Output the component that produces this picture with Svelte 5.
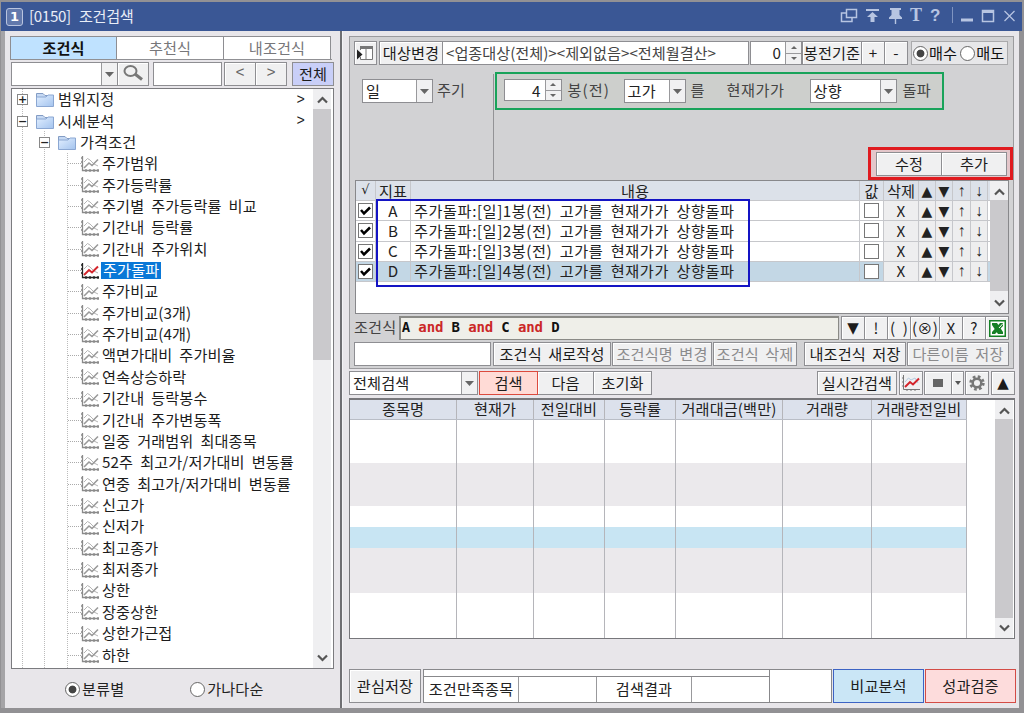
<script lang="ts">
	const tabs = ["조건식", "추천식", "내조건식"];

	const items = [
		"주가범위", "주가등락률", "주기별 주가등락률 비교", "기간내 등락률",
		"기간내 주가위치", "주가돌파", "주가비교", "주가비교(3개)", "주가비교(4개)",
		"액면가대비 주가비율", "연속상승하락", "기간내 등락봉수", "기간내 주가변동폭",
		"일중 거래범위 최대종목", "52주 최고가/저가대비 변동률", "연중 최고가/저가대비 변동률",
		"신고가", "신저가", "최고종가", "최저종가", "상한", "장중상한", "상한가근접", "하한"
	];
	let selected = $state("주가돌파");

	const conditions = ["A", "B", "C", "D"];
	let current = $state("D");

	const columns = ["종목명", "현재가", "전일대비", "등락률", "거래대금(백만)", "거래량", "거래량전일비"];
	const bands = ["white", "gray", "white short", "cyan", "gray tall", "white last"];
</script>

{#snippet down()}
	<span class="drop"><svg width="9" height="5"><path d="M0 0H9L4.5 5Z" fill="#666" /></svg></span>
{/snippet}

{#snippet chart(active: boolean)}
	<svg class="chart" width="18" height="16" viewBox="0 0 18 16" fill="none">
		<path d="M1.5 0V14.5H18M0 2H2M0 6H2M0 10H2M5 13V16M9 13V16M13 13V16M17 13V16" stroke={active ? "#222" : "#8a8a8a"} stroke-width="1.3" />
		<path d="M3 6L6.5 2.5L9 4L13 8L17 10" stroke="#b5b5b5" />
		<path d="M3 12L8 7L11 9.5L17 3.5" stroke={active ? "#d3242b" : "#999"} stroke-width={active ? 2 : 1.6} />
	</svg>
{/snippet}

{#snippet folder()}
	<svg class="folder" width="18" height="15" viewBox="0 0 18 15">
		<path d="M.5 1.5H7L9 3.5H15V6H.5Z" fill="#c6d9f3" stroke="#839cc4" />
		<path d="M.5 5H10L12 3H17.5V14.5H.5Z" fill="url(#folderFill)" stroke="#8ba7d2" />
	</svg>
{/snippet}

{#snippet scrollbar()}
	<div class="scroll">
		<svg class="up" width="11" height="8"><path d="M1 6.5L5.5 2L10 6.5" fill="none" stroke="#555" stroke-width="2.2" /></svg>
		<div class="thumb"></div>
		<svg class="dn" width="11" height="8"><path d="M1 1.5L5.5 6L10 1.5" fill="none" stroke="#555" stroke-width="2.2" /></svg>
	</div>
{/snippet}

{#snippet spinner()}
	<span class="spin">
		<span><svg width="6" height="3"><path d="M0 3H6L3 0Z" fill="#666" /></svg></span>
		<span><svg width="6" height="3"><path d="M0 0H6L3 3Z" fill="#666" /></svg></span>
	</span>
{/snippet}

<svg width="0" height="0" class="defs">
	<linearGradient id="folderFill" x1="0" y1="0" x2="1" y2="1">
		<stop offset="0" stop-color="#e2efff" />
		<stop offset="1" stop-color="#a3c3ee" />
	</linearGradient>
</svg>

<div class="window">
	<header>
		<span class="num">1</span>
		<span class="title">[0150] 조건검색</span>
		<svg class="tools" width="176" height="22" viewBox="0 0 176 22" fill="none" stroke="#b7c5e2" stroke-width="1.5">
			<path d="M6.5 3.5H16.500V11.500H6.500ZM6 7H1.500V15.500H12V12" />
			<path d="M26 4H39" stroke-width="2" />
			<path d="M32.500 6L38 11H34.500V16H30.500V11H27Z" fill="#b7c5e2" stroke="none" />
			<path d="M50 2H61V4H59.500V9L62 11.500V13H49V11.500L51.500 9V4H50ZM54.800 13H56.200V18H54.800Z" fill="#b7c5e2" stroke="none" />
			<path d="M112.500 1V17" stroke="#7f94c1" stroke-width="1" />
			<path d="M121 14H133" stroke-width="3" />
			<path d="M142.500 4.500H153.500V15.500H142.500Z" />
			<path d="M142 5.500H154" stroke-width="3" />
			<path d="M164.500 5L174.500 15M174.500 5L164.500 15" stroke-width="1.200" />
			<text x="70" y="15" class="tool-text">T</text>
			<text x="90" y="15" class="tool-help">?</text>
		</svg>
	</header>

	<main>
		<aside>
			<div class="tabs">
				{#each tabs as tab, i}
					<button class:active={i === 0}>{tab}</button>
				{/each}
			</div>
			<div class="find">
				<div class="combo keyword"><span></span>{@render down()}</div>
				<button class="lens" aria-label="검색">
					<svg width="20" height="16" viewBox="0 0 20 16" fill="none" stroke="#777"><ellipse cx="7.500" cy="6" rx="6" ry="5" stroke-width="2" /><path d="M12 9L19 14.500" stroke-width="3" /></svg>
				</button>
				<div class="field filter"></div>
				<button class="prev">&lt;</button>
				<button class="next">&gt;</button>
				<button class="all">전체</button>
			</div>

			<div class="tree">
				<div class="nodes">
					<div class="node root"><span class="box">+</span>{@render folder()}<span class="label">범위지정</span><span class="more">&gt;</span></div>
					<div class="node root"><span class="box">−</span>{@render folder()}<span class="label">시세분석</span><span class="more">&gt;</span></div>
					<div class="node sub"><span class="box">−</span>{@render folder()}<span class="label">가격조건</span></div>
					{#each items as item}
						<div class="node leaf">
							<span class="dots"></span>
							{@render chart(item === selected)}
							<button class="label" class:selected={item === selected} onclick={() => (selected = item)}>{item}</button>
						</div>
					{/each}
				</div>
				{@render scrollbar()}
			</div>

			<div class="sort">
				<span class="radio on"></span><span>분류별</span>
				<span class="radio second"></span><span>가나다순</span>
			</div>
		</aside>

		<section class="right">
			<div class="editor">
				<div class="target">
					<button class="panel-btn" aria-label="대상">
						<svg width="17" height="16" viewBox="0 0 17 16"><path d="M3.500 5V1.500H15.500V14.500H3.500V12M3 3H16M9 3V14" fill="#fff" stroke="#777" /><path d="M3 1H16V4H3Z" fill="#777" /><path d="M0 4.500L5.500 9.500L0 14.500Z" fill="#222" /></svg>
					</button>
					<button class="change">대상변경</button>
					<div class="field scope">&lt;업종대상(전체)&gt;&lt;제외없음&gt;&lt;전체월결산&gt;</div>
					<div class="field zero"><span>0</span>{@render spinner()}</div>
					<button class="base">봉전기준</button>
					<button class="plus">+</button>
					<button class="minus">-</button>
					<div class="side"><span class="radio on"></span><span>매수</span><span class="radio"></span><span>매도</span></div>
				</div>

				<div class="params">
					<div class="cycle">
						<div class="combo day"><span>일</span>{@render down()}</div>
						<span>주기</span>
					</div>
					<div class="rule-area">
						<div class="rule">
							<div class="field count"><span>4</span>{@render spinner()}</div>
							<span class="bar">봉(전)</span>
							<div class="combo high"><span>고가</span>{@render down()}</div>
							<span class="obj">를</span>
							<span class="now">현재가가</span>
							<div class="combo dir"><span>상향</span>{@render down()}</div>
							<span>돌파</span>
						</div>
						<div class="apply">
							<button>수정</button>
							<button>추가</button>
						</div>
					</div>
				</div>

				<div class="list">
					<div class="grid">
						<div class="line head">
							<span class="root-sign">√</span><span>지표</span><span>내용</span><span>값</span><span>삭제</span>
							<span class="tri">▲</span><span class="tri">▼</span><span class="arrow">↑</span><span class="arrow">↓</span>
						</div>
						{#each conditions as id, i}
							<div class="line" class:current={id === current}>
								<span class="tick"><i class="check"><svg width="11" height="10" viewBox="0 0 11 10"><path d="M1 4L4 7.500L10 1.500" fill="none" stroke="#000" stroke-width="2.500" /></svg></i></span>
								<span>{id}</span>
								<span class="desc">주가돌파:[일]{i + 1}봉(전) 고가를 현재가가 상향돌파</span>
								<span class="tick"><i class="check"></i></span>
								<span class="op">X</span>
								<span class="op tri">▲</span><span class="op tri">▼</span><span class="op arrow">↑</span><span class="op arrow">↓</span>
							</div>
						{/each}
						<div class="mark"></div>
					</div>
					{@render scrollbar()}
				</div>

				<div class="formula">
					<span class="caption">조건식</span>
					<div class="expr">A <b>and</b> B <b>and</b> C <b>and</b> D</div>
					<div class="ops">
						<button class="tri">▼</button><button>!</button><button class="paren open">( )</button><button class="paren">(⊗)</button><button>X</button><button>?</button>
						<button aria-label="Excel" class="excel">
							<svg width="17" height="17" viewBox="0 0 17 17"><rect x=".75" y=".75" width="15.500" height="15.500" fill="#fff" stroke="#158025" stroke-width="1.500" /><path d="M3 3H8L14 12V14H9L3 5Z" fill="#158025" /><path d="M14 3H11L3 12V14H6L14 6Z" fill="#158025" /><path d="M10 8L14 3.500" stroke="#fff" /></svg>
						</button>
					</div>
				</div>

				<div class="saves">
					<div class="field name"></div>
					<button class="create">조건식 새로작성</button>
					<button class="rename" disabled>조건식명 변경</button>
					<button class="remove" disabled>조건식 삭제</button>
					<button class="save">내조건식 저장</button>
					<button class="save-as" disabled>다른이름 저장</button>
				</div>
			</div>

			<div class="search">
				<div class="combo whole"><span>전체검색</span>{@render down()}</div>
				<button class="go">검색</button>
				<button class="more-btn">다음</button>
				<button class="reset">초기화</button>
				<button class="live">실시간검색</button>
				<button class="ic" aria-label="차트">
					<svg width="18" height="16" viewBox="0 0 18 16" fill="none">
						<path d="M1.5 0V14.5H18M0 3H2M0 7H2M0 11H2M5 14V16M9 14V16M13 14V16" stroke="#777" />
						<path d="M3 7L6.500 3L9 5L13 3L16 8" stroke="#b4cbe0" />
						<path d="M3 12L8 7L11 9.500L17 3.500" stroke="#d3242b" stroke-width="2" />
					</svg>
				</button>
				<button class="stop" aria-label="정지"><svg width="10" height="8"><rect width="10" height="8" fill="#666" /></svg></button>
				<button class="stop-menu" aria-label="메뉴"><svg width="6" height="4"><path d="M0 0H6L3 4Z" fill="#555" /></svg></button>
				<button class="ic" aria-label="설정">
					<svg width="16" height="16" viewBox="0 0 16 16" fill="none" stroke="#777"><circle cx="8" cy="8" r="6.200" stroke-width="3" stroke-dasharray="2.600 2.270" /><circle cx="8" cy="8" r="4.300" stroke-width="2.500" /></svg>
				</button>
				<button class="fold tri">▲</button>
			</div>

			<div class="result">
				<div class="table">
					<div class="cols head">
						{#each columns as column}<span>{column}</span>{/each}
					</div>
					{#each bands as band}
						<div class="cols {band}">
							{#each columns as _}<span></span>{/each}
						</div>
					{/each}
				</div>
				{@render scrollbar()}
			</div>

			<footer>
				<button class="keep">관심저장</button>
				<div class="stats">
					<div class="progress"></div>
					<div class="cells"><span>조건만족종목</span><span></span><span>검색결과</span><span></span></div>
				</div>
				<div class="blank"></div>
				<button class="compare">비교분석</button>
				<button class="verify">성과검증</button>
			</footer>
		</section>
	</main>
</div>

<style>
	:global(body) {
		margin: 0;
		overflow: hidden;
	}

	* {
		box-sizing: border-box;
	}

	.defs {
		position: absolute;
	}

	.window {
		width: 1024px;
		height: 713px;
		padding: 2px 2px 5px 1px;
		background: #929194;
		color: #222;
		font: 15.2px/20px "Noto Sans CJK KR", sans-serif;
		letter-spacing: 0.1px;
		word-spacing: 3.5px;
		white-space: nowrap;
	}

	svg {
		display: block;
		flex: none;
	}

	button {
		display: flex;
		justify-content: center;
		align-items: center;
		flex: none;
		height: 24px;
		margin: 0;
		padding: 0 0 3px;
		border: 1px solid #8e8e92;
		border-radius: 0;
		background: #f0f0f1;
		box-shadow: inset 1px 1px #fff;
		color: #1c1c1c;
		font: inherit;
		letter-spacing: inherit;
		word-spacing: inherit;
		white-space: nowrap;
	}

	button:disabled {
		color: #8b8b8d;
	}

	header {
		display: flex;
		align-items: center;
		height: 29px;
		padding: 0 6px 0 5px;
		background: #3a5795;
		color: #e8edf7;
	}

	.num {
		width: 17px;
		height: 18px;
		border: 1.5px solid #b9c4df;
		border-radius: 3px;
		background: #6279ac;
		color: #fff;
		font: bold 13px/15px "DejaVu Sans", sans-serif;
		text-align: center;
	}

	.title {
		margin: -4px 0 0 6px;
		letter-spacing: -0.35px;
		word-spacing: 5px;
	}

	.tools {
		margin-left: auto;
	}

	.tool-text {
		fill: #b7c5e2;
		stroke: none;
		font: bold 18px "Liberation Serif", serif;
	}

	.tool-help {
		fill: #b7c5e2;
		stroke: none;
		font: bold 17px "Liberation Sans", sans-serif;
	}

	main {
		display: flex;
		height: 677px;
	}

	aside {
		width: 341px;
		padding: 5px 0 0 5px;
		border-left: 4px solid #a5a4a7;
		border-right: 2px solid #6f6f73;
		background: #e8e6ea;
	}

	.tabs {
		display: flex;
		width: 322px;
		border-bottom: 1px solid #909094;
	}

	.tabs button {
		width: 107px;
		height: 23px;
		border-bottom: 0;
		border-left-width: 0;
		background: #fff;
		color: #77777a;
	}

	.tabs button.active {
		border-left-width: 1px;
		background: #bfe2ff;
		box-shadow: none;
		color: #111;
		font-weight: bold;
	}

	.find {
		display: flex;
		margin: 2px 0 2px 1px;
	}

	.combo,
	.field {
		display: flex;
		flex: none;
		height: 24px;
		border: 1px solid #8e8e92;
		background: #fff;
		color: #222;
		line-height: 20px;
	}

	.combo > span:first-child {
		flex: 1;
		padding-left: 3px;
	}

	.drop {
		display: flex;
		align-items: center;
		justify-content: center;
		width: 16px;
		border-left: 1px solid #99999c;
		background: #f1f1f2;
	}

	.keyword {
		width: 107px;
	}

	.lens {
		width: 32px;
		margin-left: -1px;
	}

	.filter {
		width: 69px;
		margin-left: 4px;
	}

	.prev,
	.next {
		width: 32px;
		margin-left: 2px;
		color: #666;
		font-family: "Liberation Mono", monospace;
	}

	.next {
		margin-left: -1px;
	}

	.all {
		width: 42px;
		margin-left: 5px;
		background: #c9cff8;
		box-shadow: none;
	}

	.tree {
		display: flex;
		width: 323px;
		height: 581px;
		margin-left: 1px;
		border: 1px solid #7b7b7f;
		background: #fff;
	}

	.nodes {
		flex: 1;
		min-width: 0;
		background:
			repeating-linear-gradient(#bbb 0 1px, transparent 1px 2px) 10px 0 / 1px 100% no-repeat,
			repeating-linear-gradient(#bbb 0 1px, transparent 1px 2px) 32px 42px / 1px 100% no-repeat,
			repeating-linear-gradient(#bbb 0 1px, transparent 1px 2px) 55px 64px / 1px 100% no-repeat;
	}

	.node {
		display: flex;
		align-items: center;
		height: 21.37px;
	}

	.box {
		width: 11px;
		height: 11px;
		border: 1px solid #888;
		background: #fff;
		font: bold 11px/9px "DejaVu Sans", sans-serif;
		text-align: center;
	}

	.root {
		padding-left: 5px;
	}

	.sub {
		padding-left: 27px;
	}

	.folder {
		margin: 0 3px 0 8px;
	}

	.leaf {
		padding-left: 56px;
	}

	.dots {
		width: 13px;
		border-top: 1px dotted #aaa;
	}

	.node .label {
		height: 17px;
		padding: 0 1px;
		border: 0;
		background: none;
		box-shadow: none;
		line-height: 15px;
	}

	.node button.label {
		align-items: flex-start;
		margin-left: 2px;
	}

	.node .label.selected {
		padding: 0 2px;
		background: #0a78d7;
		color: #fff;
	}

	.more {
		margin: 0 8px 0 auto;
		font: 14px "Liberation Mono", monospace;
	}

	.scroll {
		display: flex;
		flex-direction: column;
		align-items: center;
		flex: none;
		width: 18px;
		background: #efeff1;
	}

	.thumb {
		width: 18px;
		height: 251px;
		background: #cac9cc;
	}

	.up {
		margin: 7px 0 5px;
	}

	.dn {
		margin: auto 0 6px;
	}

	.tree .scroll {
		margin-right: 2px;
	}

	.sort {
		display: flex;
		align-items: center;
		padding: 12px 0 0 55px;
	}

	.sort span:not(.radio),
	.side span:not(.radio) {
		margin-top: -3px;
	}

	.radio {
		flex: none;
		width: 15px;
		height: 15px;
		margin-right: 2px;
		border: 1px solid #666;
		border-radius: 50%;
		background: #fff;
	}

	.radio.on {
		background: radial-gradient(circle, #444 0 3.5px, #fff 4.3px);
	}

	.second {
		margin-left: 66px;
	}

	.right {
		width: 677px;
		padding: 5px 0 0 6px;
		border-left: 1px solid #f3f3f6;
		background: #e8e6ea;
	}

	.editor {
		width: 665px;
		height: 333px;
		padding: 4px 5px 0 4px;
		border: 1px solid #9b9b9e;
		background: #d2d2d4;
	}

	.target {
		display: flex;
	}

	.panel-btn {
		width: 23px;
		padding: 0;
	}

	.change {
		width: 64px;
		margin-left: 2px;
	}

	.scope {
		width: 307px;
		margin-left: -1px;
		padding-left: 3px;
		color: #444;
		letter-spacing: -0.02px;
	}

	.zero {
		width: 52px;
		margin-left: 1px;
	}

	.zero > span:first-child,
	.count > span:first-child {
		flex: 1;
		padding-right: 4px;
		text-align: right;
	}

	.spin {
		display: flex;
		flex-direction: column;
		width: 16px;
		border-left: 1px solid #99999c;
		background: #f1f1f2;
	}

	.spin span {
		display: flex;
		flex: 1;
		align-items: center;
		justify-content: center;
	}

	.spin span:first-child {
		border-bottom: 1px solid #99999c;
	}

	.base {
		width: 60px;
	}

	.plus,
	.minus {
		width: 24px;
		margin-left: -1px;
	}

	.side {
		display: flex;
		align-items: center;
		width: 99px;
		margin-left: 3px;
		padding-left: 1px;
		border: 1px solid #aaaaac;
		background: #e7e7e9;
		color: #111;
	}

	.side .radio {
		margin-right: 1px;
	}

	.side span + .radio {
		margin-left: 3px;
	}

	.params {
		display: flex;
		height: 115px;
		padding-top: 7px;
		color: #444;
	}

	.cycle {
		display: flex;
		gap: 4px;
		width: 141px;
		margin-top: 2px;
		padding: 5px 0 0 8px;
		border-right: 1px solid #939396;
		line-height: 20px;
	}

	.combo.day {
		width: 71px;
	}

	.rule-area {
		width: 520px;
	}

	.rule {
		display: flex;
		width: 449px;
		height: 38px;
		padding: 5px 0 0 7px;
		border: 2px solid #19a35a;
		background: #cdcfcc;
		line-height: 20px;
		margin-left: 1px;
	}

	.count {
		width: 58px;
		height: 22px;
	}

	.bar {
		width: 56px;
		margin-left: 6px;
		letter-spacing: 1px;
	}

	.high {
		width: 62px;
	}

	.obj {
		width: 36px;
		margin-left: 5px;
	}

	.now {
		width: 83px;
		letter-spacing: 0.5px;
	}

	.dir {
		width: 87px;
		margin-right: 6px;
	}

	.apply {
		position: relative;
		left: 5px;
		display: flex;
		width: 145px;
		height: 33px;
		margin: 37px 0 0 auto;
		padding: 2px 0 0 5px;
		border: 3px solid #e01b20;
		background: #e4c6ca;
	}

	.apply button {
		width: 66px;
	}

	.apply button + button {
		margin-left: -1px;
	}

	.list {
		display: flex;
		width: 654px;
		height: 134px;
		margin-left: 1px;
		border: 1px solid #88888b;
		background: #fff;
	}

	.grid {
		position: relative;
		flex: 1;
	}

	.line {
		display: grid;
		grid-template-columns: 20px 35px 449px 24px 35px 17px 17px 18px 17px;
		height: 20.2px;
		background: #fff;
		border-bottom: 1px solid #c6c7cb;
	}

	.line > span {
		display: flex;
		align-items: center;
		justify-content: center;
		padding-bottom: 2px;
		border-right: 1px solid #c6c7cb;
		line-height: 16px;
	}

	.line > .tick {
		padding-bottom: 0;
	}

	.line.head {
		background: #dce1e9;
	}

	.line.current {
		background: #c3d7e5;
	}

	.line > .desc {
		justify-content: flex-start;
		padding-left: 3px;
		letter-spacing: 0.56px;
		white-space: pre;
	}

	.line > .op {
		background: #eeeeef;
	}

	.root-sign {
		font: 13px "DejaVu Sans", sans-serif;
	}

	.tri {
		padding-bottom: 0;
		font-family: "DejaVu Sans", sans-serif;
		font-size: 15px;
	}

	.line > .tri {
		padding-bottom: 0;
		font-size: 14px;
	}

	.line > .arrow {
		padding-bottom: 0;
		font: 16px/16px "Liberation Sans", sans-serif;
	}

	.check {
		display: block;
		width: 15px;
		height: 15px;
		padding: 2px 1px;
		border: 1px solid #777;
		background: #fff;
	}

	/* outline round the indicator rows */
	.mark {
		position: absolute;
		left: 20px;
		top: 18px;
		width: 374px;
		height: 88px;
		border: 2px solid #1414c4;
	}

	.list .thumb {
		height: 91px;
	}

	.list .up {
		margin: 7px 0 4px;
	}

	.formula {
		display: flex;
		margin-top: 2px;
	}

	.caption {
		width: 45px;
		color: #444;
		line-height: 20px;
	}

	.expr {
		width: 443px;
		height: 24px;
		padding-left: 1px;
		border: 2px solid #8a8a86;
		border-right-width: 1px;
		border-bottom-width: 1px;
		background: #efefe9;
		color: #111;
		font: bold 14px/18px "DejaVu Sans Mono", monospace;
		letter-spacing: -0.13px;
		word-spacing: 0;
	}

	.expr b {
		color: #cb2727;
	}

	.ops {
		display: flex;
		margin-left: 2px;
	}

	.ops button {
		width: 24px;
		margin-right: -1px;
	}

	.ops .paren {
		width: 30px;
		word-spacing: 0;
	}

	.ops .open {
		width: 24px;
		word-spacing: 4px;
	}

	.ops .excel {
		padding: 0;
	}

	.saves {
		display: flex;
		margin-top: 2px;
		word-spacing: 3px;
	}

	.name {
		width: 137px;
	}

	.create {
		width: 118px;
		margin-left: 2px;
	}

	.rename {
		width: 100px;
		margin-left: 1px;
	}

	.remove {
		width: 84px;
		margin-left: 1px;
	}

	.save {
		width: 102px;
		margin-left: 7px;
	}

	.save-as {
		width: 102px;
		margin-left: 1px;
	}

	.search {
		display: flex;
		width: 666px;
		margin-top: 2px;
	}

	.whole {
		width: 129px;
	}

	.go {
		width: 59px;
		margin-left: 1px;
		border-color: #dc4a3d;
		background: #ffdbd6;
		box-shadow: none;
	}

	.more-btn {
		width: 56px;
		border-left: 0;
	}

	.reset {
		width: 59px;
		margin-left: -1px;
	}

	.live {
		width: 80px;
		margin: 0 2px 0 auto;
	}

	.ic {
		width: 24px;
		padding: 0;
	}

	.stop {
		width: 28px;
		margin-left: 1px;
		padding: 0;
	}

	.stop-menu {
		width: 13px;
		margin: 0 1px 0 -1px;
		padding: 0;
	}

	.fold {
		width: 24px;
		margin-left: 2px;
	}

	.result {
		display: flex;
		width: 666px;
		height: 241px;
		margin-top: 3px;
		padding-right: 1px;
		border: 1px solid #77777b;
		border-top-width: 2px;
		background: #fff;
	}

	.table {
		display: flex;
		flex-direction: column;
		width: 617px;
	}

	.cols {
		display: grid;
		grid-template-columns: 107px 77px 71px 71px 107px 89px 95px;
		height: 43px;
		background: #fff;
	}

	.cols span {
		border-right: 1px solid #b5b5ba;
		line-height: 16px;
		text-align: center;
	}

	.cols.head {
		height: 20px;
		border-bottom: 1px solid #b9bdc6;
		background: #dce1ec;
	}

	.cols.gray {
		background: #ebe9ec;
	}

	.cols.short {
		height: 21px;
	}

	.cols.cyan {
		height: 21px;
		background: #c8e5f3;
	}

	.cols.tall {
		height: 45px;
	}

	.cols.last {
		height: auto;
		flex: 1;
	}

	.result .scroll {
		margin-left: auto;
	}

	.result .up {
		margin: 7px 0 4px;
	}

	.result .thumb {
		height: 199px;
	}

	footer {
		display: flex;
		height: 34px;
		margin-top: 30px;
	}

	footer button {
		height: 34px;
	}

	.keep {
		width: 72px;
	}

	.stats {
		width: 347px;
		margin-left: 2px;
		border: 1px solid #88888b;
		background: #fff;
	}

	.progress {
		height: 7px;
		border-bottom: 1px solid #88888b;
	}

	.cells {
		display: grid;
		grid-template-columns: 94px 78px 95px 78px;
		height: 25px;
		line-height: 22px;
		text-align: center;
	}

	.cells span + span {
		border-left: 1px solid #99999c;
	}

	.blank {
		width: 62px;
		border: 1px solid #88888b;
		border-left: 0;
		background: #fff;
	}

	.compare {
		width: 91px;
		margin-left: 1px;
		border: 1.5px solid #3c63c4;
		background: #cae6f6;
		box-shadow: none;
	}

	.verify {
		width: 91px;
		margin-left: 1px;
		border: 1.5px solid #d44c46;
		background: #fddcdc;
		box-shadow: none;
	}
</style>
